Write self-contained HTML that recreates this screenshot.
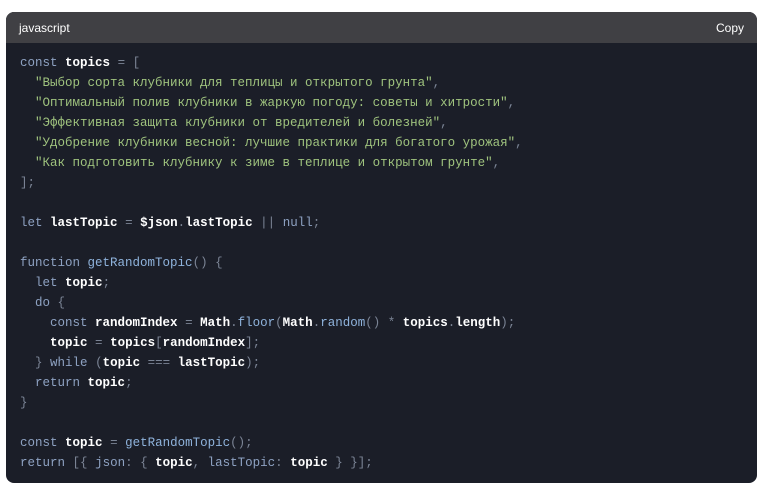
<!DOCTYPE html>
<html><head><meta charset="utf-8"><style>
body{margin:0;background:#fff;width:758px;height:489px;overflow:hidden}
.box{position:absolute;left:6px;top:12px;width:751px;height:471px;border-radius:8px;overflow:hidden;background:#1b1e28}
.hd{height:31px;background:#404044;color:#fff;font:12px "Liberation Sans",sans-serif;position:relative}
.hd .l{position:absolute;left:13px;top:9px}
.hd .r{position:absolute;right:13px;top:9px}
pre{margin:0;padding:10px 0 0 14px;font:12.5px/20px "Liberation Mono","DejaVu Sans Mono",monospace;color:#8a93a6}
.k{color:#8ea2c2}.b{color:#fff;font-weight:bold}.s{color:#9fc37e}.f{color:#8fb3dc}.p{color:#7b8495}
</style></head><body><div class="box"><div class="hd"><span class="l">javascript</span><span class="r">Copy</span></div>
<pre><span class="k">const</span> <span class="b">topics</span> <span class="p">=</span> <span class="p">[</span>
  <span class="s">"Выбор сорта клубники для теплицы и открытого грунта"</span><span class="p">,</span>
  <span class="s">"Оптимальный полив клубники в жаркую погоду: советы и хитрости"</span><span class="p">,</span>
  <span class="s">"Эффективная защита клубники от вредителей и болезней"</span><span class="p">,</span>
  <span class="s">"Удобрение клубники весной: лучшие практики для богатого урожая"</span><span class="p">,</span>
  <span class="s">"Как подготовить клубнику к зиме в теплице и открытом грунте"</span><span class="p">,</span>
<span class="p">];</span>

<span class="k">let</span> <span class="b">lastTopic</span> <span class="p">=</span> <span class="b">$json</span><span class="p">.</span><span class="b">lastTopic</span> <span class="p">||</span> <span class="k">null</span><span class="p">;</span>

<span class="k">function</span> <span class="f">getRandomTopic</span><span class="p">() {</span>
  <span class="k">let</span> <span class="b">topic</span><span class="p">;</span>
  <span class="k">do</span> <span class="p">{</span>
    <span class="k">const</span> <span class="b">randomIndex</span> <span class="p">=</span> <span class="b">Math</span><span class="p">.</span><span class="f">floor</span><span class="p">(</span><span class="b">Math</span><span class="p">.</span><span class="f">random</span><span class="p">() *</span> <span class="b">topics</span><span class="p">.</span><span class="b">length</span><span class="p">);</span>
    <span class="b">topic</span> <span class="p">=</span> <span class="b">topics</span><span class="p">[</span><span class="b">randomIndex</span><span class="p">];</span>
  <span class="p">}</span> <span class="k">while</span> <span class="p">(</span><span class="b">topic</span> <span class="p">===</span> <span class="b">lastTopic</span><span class="p">);</span>
  <span class="k">return</span> <span class="b">topic</span><span class="p">;</span>
<span class="p">}</span>

<span class="k">const</span> <span class="b">topic</span> <span class="p">=</span> <span class="f">getRandomTopic</span><span class="p">();</span>
<span class="k">return</span> <span class="p">[{</span> <span class="k">json</span><span class="p">: {</span> <span class="b">topic</span><span class="p">,</span> <span class="k">lastTopic</span><span class="p">:</span> <span class="b">topic</span> <span class="p">} }];</span></pre></div></body></html>
